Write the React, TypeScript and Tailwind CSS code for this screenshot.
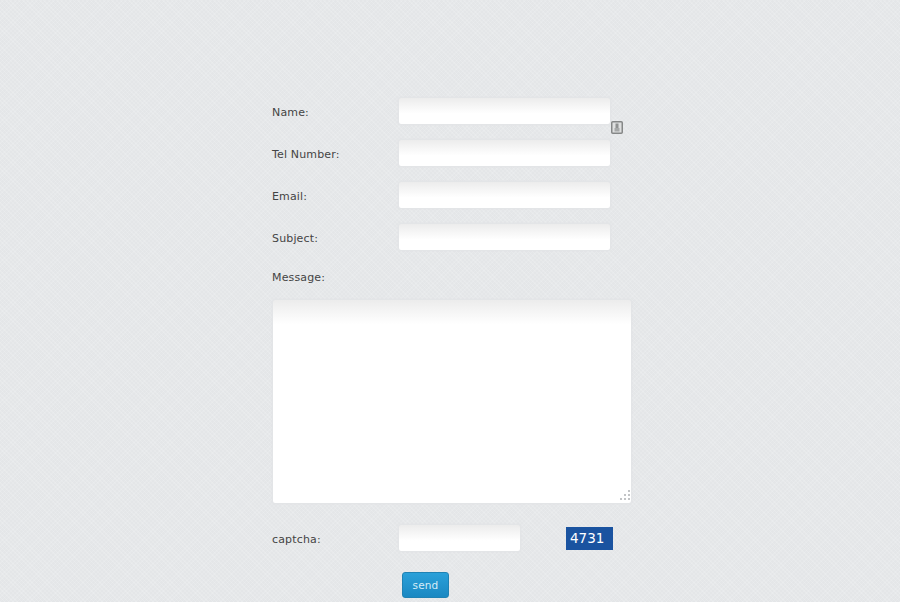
import React from 'react';

const fields = ['Name:', 'Tel Number:', 'Email:', 'Subject:'];

const inputClass =
  'block h-[28px] rounded-[3px] border border-[#e3e5e7] bg-gradient-to-b from-[#ececec] to-white to-60% shadow-[0_0_2px_#dfe1e3] outline-none';

function Field({ label, warn }: { label: string; warn?: boolean }) {
  return (
    <div className="flex h-[28px] items-center">
      <label className="w-[126px] pt-[4px]">{label}</label>
      <div className="relative">
        <input className={`${inputClass} w-[213px]`} />
        {warn && (
          <svg className="absolute left-[213px] top-[24px]" width="12" height="13" viewBox="0 0 12 13">
            <rect x="0.75" y="0.75" width="10.5" height="11.5" rx="1" fill="#dfe0e0" stroke="#858787" strokeWidth="1.5" />
            <rect x="4.5" y="2.5" width="3" height="4.5" fill="#8f9191" />
            <rect x="3.5" y="7" width="5" height="3.5" fill="#a6a8a8" />
          </svg>
        )}
      </div>
    </div>
  );
}

export default function App() {
  return (
    <div className="h-[602px] w-[900px] overflow-hidden bg-[#e4e6e8] bg-[repeating-linear-gradient(45deg,rgba(255,255,255,0.14)_0,rgba(255,255,255,0.14)_1px,transparent_1px,transparent_3px),repeating-linear-gradient(-45deg,rgba(255,255,255,0.12)_0,rgba(255,255,255,0.12)_1px,transparent_1px,transparent_3px)] font-['DejaVu_Sans',sans-serif] text-[11px] tracking-[0.15px] text-[#444]">
      <form className="ml-[272px] flex w-[360px] flex-col pt-[97px]">
        <div className="flex flex-col gap-[14px]">
          {fields.map((f, i) => (
            <Field key={f} label={f} warn={i === 0} />
          ))}
        </div>

        <label className="mt-[19px] h-[16px] leading-[16px]">Message:</label>

        <div className="relative mt-[13px]">
          <textarea className="block h-[205px] w-[360px] resize-none rounded-[3px] border border-[#e3e5e7] bg-gradient-to-b from-[#ececec] to-white to-[12%] shadow-[0_0_2px_#dfe1e3] outline-none" />
          <svg className="absolute bottom-[3px] right-[1px]" width="11" height="11" viewBox="0 0 11 11" fill="#c2c4c6">
            <rect x="8" y="0" width="2" height="2" />
            <rect x="4" y="4" width="2" height="2" />
            <rect x="8" y="4" width="2" height="2" />
            <rect x="0" y="8" width="2" height="2" />
            <rect x="4" y="8" width="2" height="2" />
            <rect x="8" y="8" width="2" height="2" />
          </svg>
        </div>

        <div className="mt-[20px] flex h-[28px] items-center">
          <label className="w-[126px] pt-[5px]">captcha:</label>
          <input className={`${inputClass} w-[123px]`} />
          <div className="ml-[45px] flex h-[23px] w-[47px] items-center bg-[#1a53a0] pl-[4px] text-[13.5px] tracking-normal text-white">
            4731
          </div>
        </div>

        <button
          type="button"
          className="ml-[130px] mt-[20px] h-[26px] w-[47px] rounded-[3px] border border-[#1f82b4] bg-gradient-to-b from-[#2aa0d9] to-[#1a88c2] pt-[2px] text-[10.5px] text-[#d5edf8]"
        >
          send
        </button>
      </form>
    </div>
  );
}
